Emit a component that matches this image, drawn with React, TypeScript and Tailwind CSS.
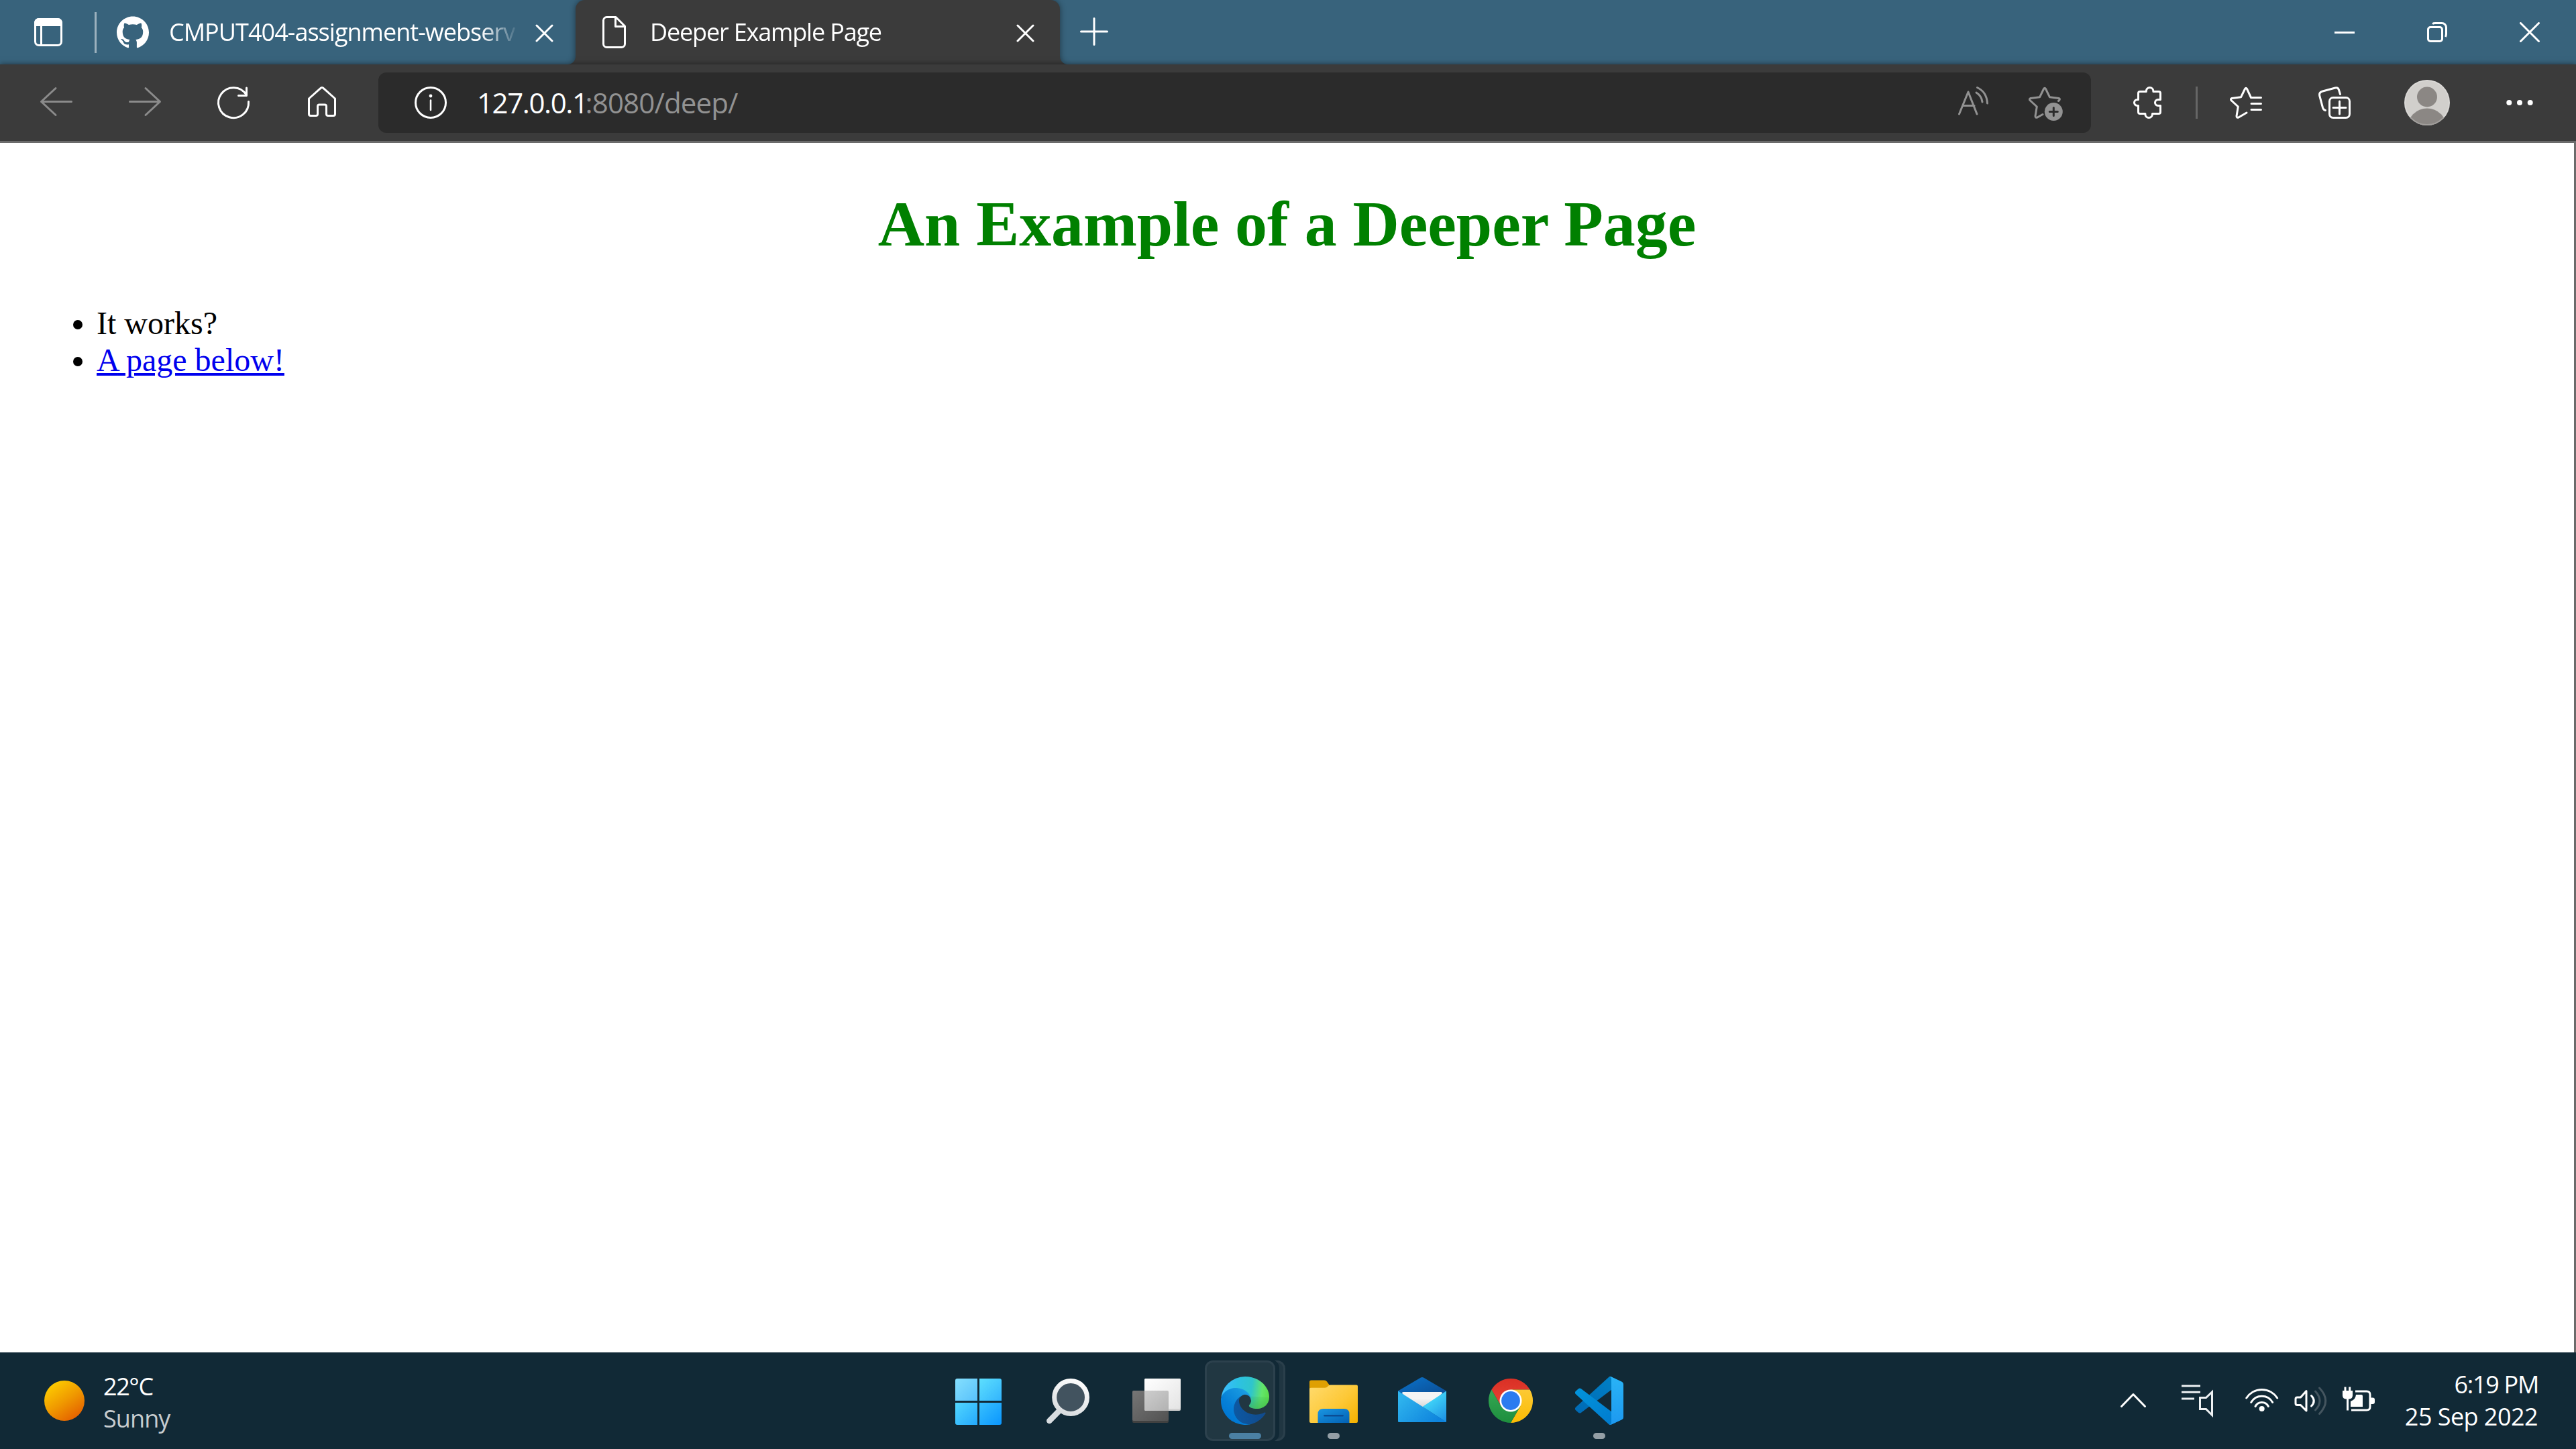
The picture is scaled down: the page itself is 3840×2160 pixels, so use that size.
import type { ReactNode } from 'react';
import { SiGithub } from 'react-icons/si';

const sans = "font-['Open_Sans','Segoe_UI',sans-serif]";

function Glyph({ children, className = '' }: { children: ReactNode; className?: string }) {
  return (
    <svg
      viewBox="0 0 48 48"
      className={`size-12 shrink-0 overflow-visible ${className}`}
      fill="none"
      stroke="currentColor"
      strokeWidth={3}
      strokeLinecap="round"
      strokeLinejoin="round"
    >
      {children}
    </svg>
  );
}

function CloseGlyph() {
  return (
    <svg viewBox="0 0 27 27" className="size-[27px] shrink-0" fill="none" stroke="currentColor" strokeWidth={3} strokeLinecap="round">
      <path d="M2 2l23 23M25 2L2 25" />
    </svg>
  );
}

function TabStrip() {
  return (
    <div className="flex h-24 items-center bg-[#38637c] text-4xl text-white">
      <div className="flex h-full w-[858px] shrink-0 items-center pl-[51px]">
        <svg viewBox="0 0 42 42" className="size-[42px] shrink-0">
          <rect x="1.5" y="1.5" width="39" height="39" rx="5.5" fill="none" stroke="currentColor" strokeWidth={3} />
          <path d="M0 12V7a7 7 0 0 1 7-7h28a7 7 0 0 1 7 7v5zM9 12h3v28H9z" fill="currentColor" />
        </svg>
        <div className="ml-12 h-[61px] w-[3px] bg-[#9cb1be]" />
        <SiGithub className="ml-[30px] size-12 shrink-0" />
        <div className="ml-[30px] w-[522px] whitespace-nowrap pb-px leading-[56px] tracking-[-0.97px] [mask-image:linear-gradient(to_right,black_89%,transparent)]">
          CMPUT404-assignment-webserv
        </div>
        <div className="ml-6 pt-[3px]">
          <CloseGlyph />
        </div>
      </div>

      <div className="relative flex h-full w-[722px] shrink-0 items-center rounded-t-[14px] bg-[#3b3b3b] pr-[38px] pl-[33px] drop-shadow-[0_0_5px_rgba(0,0,0,0.45)] before:absolute before:bottom-0 before:-left-3 before:size-3 before:bg-[radial-gradient(circle_at_0_0,transparent_11.5px,#3b3b3b_12.5px)] after:absolute after:-right-3 after:bottom-0 after:size-3 after:bg-[radial-gradient(circle_at_100%_0,transparent_11.5px,#3b3b3b_12.5px)]">
        <Glyph>
          <path d="M13.5 1.5H27L40.5 15v26.5a5 5 0 0 1-5 5h-22a5 5 0 0 1-5-5v-35a5 5 0 0 1 5-5zM26.5 2v13.5h13.5" />
        </Glyph>
        <div className="ml-[30px] pb-px tracking-[-1.17px] whitespace-nowrap">Deeper Example Page</div>
        <div className="ml-auto pt-[3px]">
          <CloseGlyph />
        </div>
      </div>

      <svg viewBox="0 0 42 42" className="mb-[3px] ml-[30px] size-[42px]" fill="none" stroke="currentColor" strokeWidth={3} strokeLinecap="round">
        <path d="M21 1.5v39M1.5 21h39" />
      </svg>

      <div className="ml-auto flex">
        <div className="grid w-[138px] place-items-center">
          <svg viewBox="0 0 30 30" className="size-[30px]" stroke="currentColor" strokeWidth={3}>
            <path d="M0 15.5h30" />
          </svg>
        </div>
        <div className="grid w-[138px] place-items-center">
          <svg viewBox="0 0 30 30" className="size-[30px]" fill="none" stroke="currentColor" strokeWidth={3}>
            <rect x="1.5" y="7.5" width="21" height="21" rx="3.5" />
            <path d="M8 2.6Q9.5 1.5 12 1.5H22a6.5 6.5 0 0 1 6.5 6.5V17.5Q28.5 20 27.4 22" />
          </svg>
        </div>
        <div className="grid w-[138px] place-items-center">
          <svg viewBox="0 0 30 30" className="size-[30px]" stroke="currentColor" strokeWidth={3} strokeLinecap="round">
            <path d="M1.5 1.5l27 27M28.5 1.5l-27 27" />
          </svg>
        </div>
      </div>
    </div>
  );
}

function ToolButton({ children, className = '' }: { children: ReactNode; className?: string }) {
  return <div className={`grid w-[132px] shrink-0 place-items-center ${className}`}>{children}</div>;
}

function Toolbar() {
  return (
    <div className="relative flex h-[117px] items-center border-b-[3px] border-[#6b6b6b] bg-[#3b3b3b] pl-[18px] text-white shadow-[0_0_8px_rgba(0,0,0,0.5)]">
      <ToolButton className="text-[#8b8b8b]">
        <Glyph>
          <path d="M46.5 22.5h-45M23 2.5l-21.5 20 21.5 20" />
        </Glyph>
      </ToolButton>
      <ToolButton className="text-[#8b8b8b]">
        <Glyph>
          <path d="M1.5 22.5h45M25 2.5l21.5 20-21.5 20" />
        </Glyph>
      </ToolButton>
      <ToolButton>
        <Glyph>
          <path d="M46.5 22.5A22.5 22.5 0 1 1 43 12M43.5 2v11.5H31.5" />
        </Glyph>
      </ToolButton>
      <ToolButton>
        <Glyph>
          <path d="M22.3 2.2q1.7-1.4 3.4 0L43.5 18v23q0 2.5-2.5 2.5h-8q-2.5 0-2.5-2.5V29.5q0-2.5-2.5-2.5h-8q-2.5 0-2.5 2.5V41q0 2.5-2.5 2.5H7q-2.5 0-2.5-2.5V18z" />
        </Glyph>
      </ToolButton>

      <div className="ml-[18px] flex h-[90px] w-[2553px] shrink-0 items-center rounded-xl bg-[#2b2b2b] pr-[45px] pl-[54px]">
        <Glyph>
          <circle cx="24" cy="24" r="22.5" />
          <path d="M24 20.5v14.5" strokeWidth={2.5} />
          <circle cx="24" cy="14" r="2.4" fill="currentColor" stroke="none" />
        </Glyph>
        <div className="ml-[45px] flex pb-px text-[42px] leading-[60px] whitespace-nowrap">
          <span className="tracking-[-1.4px]">127.0.0.1</span>
          <span className="-ml-[3px] tracking-[-0.86px] text-[#929292]">:8080/deep/</span>
        </div>
        <Glyph className="ml-auto text-[#929292]">
          <path d="M4.5 41L18 8l13 33M10 28.5h17M31.5 1.5Q45.5 8 46.5 25M30 9Q38 14 39 23" />
        </Glyph>
        <Glyph className="ml-[60px] text-[#929292]">
          <path d="M44.5 21.5q3.5-3 .5-4L31.5 15.8 25.5 3.5q-1.5-2.5-3 0L16.5 15.8 3 17.5q-2.5 1-1 3L12.3 30 10 44q0 3 3 2l8-4.5" />
          <circle cx="37.3" cy="37.5" r="13.5" fill="currentColor" stroke="none" />
          <path d="M37.3 31.5v12M31.3 37.5h12" stroke="#2b2b2b" />
        </Glyph>
      </div>

      <ToolButton className="ml-[18px]">
        <Glyph>
          <path d="M13 7.5h9.3v-.7a5.3 5.3 0 0 1 10.6 0v.7H41q2.5 0 2.5 2.5v9.5H40a4.5 4.5 0 0 0 0 9h3.5V38q0 2.5-2.5 2.5h-9.5v.7a5.3 5.3 0 0 1-10.6 0v-.7H13q-2.5 0-2.5-2.5v-9.5H9a4.5 4.5 0 0 1 0-9h1.5V10q0-2.5 2.5-2.5z" />
        </Glyph>
      </ToolButton>
      <div className="ml-[6px] h-12 w-[3px] shrink-0 bg-[#666666]" />
      <ToolButton className="ml-[6px]">
        <Glyph>
          <path d="M46.5 16.5H31.5L25.5 3.5q-1.5-2.5-3 0L16.5 15.8 3 17.5q-2.5 1-1 3L12.3 30 10 44q0 3 3 2l12-7M32 25.5h14.5M32 34.5h14.5" />
        </Glyph>
      </ToolButton>
      <ToolButton>
        <Glyph>
          <rect x="16.5" y="16.5" width="30" height="30" rx="5.5" />
          <path d="M31.5 22v19M22 31.5h19M32.5 11.5L30.5 5q-1.2-4-5.5-3L5.5 7.2q-4.7 1.4-3.8 6.3L6.5 31.5q1.2 3.5 4 4" />
        </Glyph>
      </ToolButton>
      <ToolButton className="ml-[6px]">
        <svg viewBox="0 0 68 68" className="size-[68px]">
          <defs>
            <clipPath id="avatar">
              <circle cx="34" cy="34" r="34" />
            </clipPath>
          </defs>
          <g clipPath="url(#avatar)">
            <rect width="68" height="68" fill="#d1cfcc" />
            <circle cx="34" cy="25.5" r="15" fill="#8b8784" />
            <circle cx="34" cy="72" r="29.5" fill="#8b8784" />
          </g>
          <circle cx="34" cy="34" r="33" fill="none" stroke="#ffffff" strokeOpacity=".2" strokeWidth="2" />
        </svg>
      </ToolButton>
      <ToolButton className="ml-[6px]">
        <svg viewBox="0 0 48 48" className="size-12" fill="currentColor">
          <circle cx="8.3" cy="24" r="4" />
          <circle cx="24" cy="24" r="4" />
          <circle cx="39.7" cy="24" r="4" />
        </svg>
      </ToolButton>
    </div>
  );
}

function PageContent() {
  return (
    <div className="relative h-[1803px] border-r-[3px] border-[#6b6b6b] bg-white px-6 pt-[66px] font-['Liberation_Serif','Times_New_Roman',serif]">
      <h1 className="text-center text-[96px] leading-[110px] font-bold tracking-[-0.1px] text-[#008000]">
        An Example of a Deeper Page
      </h1>
      <ul className="mt-[65px] list-disc pl-[120px] text-5xl leading-[55px] text-black">
        <li>It works?</li>
        <li>
          <a className="text-[#0000ee] underline">
            <span className="tracking-[-2.7px]">A</span> page below!
          </a>
        </li>
      </ul>
    </div>
  );
}

function StartIcon() {
  return (
    <svg viewBox="0 0 72 72" className="size-[72px]">
      <defs>
        <linearGradient id="w1" x1="0" y1="0" x2="1" y2="1"><stop stopColor="#84dffe" /><stop offset="1" stopColor="#58c1fb" /></linearGradient>
        <linearGradient id="w2" x1="0" y1="0" x2="1" y2="1"><stop stopColor="#5ddffe" /><stop offset="1" stopColor="#32b4fd" /></linearGradient>
        <linearGradient id="w3" x1="0" y1="0" x2="1" y2="1"><stop stopColor="#52d6fe" /><stop offset="1" stopColor="#24a9fd" /></linearGradient>
        <linearGradient id="w4" x1="0" y1="0" x2="1" y2="1"><stop stopColor="#38c0fe" /><stop offset="1" stopColor="#0a96fe" /></linearGradient>
      </defs>
      <path d="M0 6q0-3 3-3h30v33H0z" fill="url(#w1)" />
      <path d="M36 3h30q3 0 3 3v30H36z" fill="url(#w2)" />
      <path d="M0 39h33v33H3q-3 0-3-3z" fill="url(#w3)" />
      <path d="M36 39h33v30q0 3-3 3H36z" fill="url(#w4)" />
    </svg>
  );
}

function SearchIcon() {
  return (
    <svg viewBox="0 0 72 72" className="size-[72px]">
      <defs>
        <linearGradient id="lens" gradientUnits="userSpaceOnUse" x1="50" y1="3" x2="26" y2="58"><stop stopColor="#ffffff" /><stop offset="1" stopColor="#d6dadd" /></linearGradient>
      </defs>
      <path d="M25 49L8.3 66" stroke="#d8dce0" strokeWidth="8.5" strokeLinecap="round" />
      <circle cx="40.1" cy="31" r="24.4" fill="#42535f" stroke="url(#lens)" strokeWidth="7" />
    </svg>
  );
}

function TaskViewIcon() {
  return (
    <svg viewBox="0 0 72 72" className="size-[72px]">
      <defs>
        <linearGradient id="tv1" x1="0" y1="0" x2="1" y2="1"><stop stopColor="#ffffff" /><stop offset="1" stopColor="#e4e4e4" /></linearGradient>
        <linearGradient id="tv2" x1="0" y1="0" x2="1" y2="1"><stop stopColor="#767676" /><stop offset="1" stopColor="#525252" /></linearGradient>
        <linearGradient id="tv3" x1="0" y1="0" x2="1" y2="1"><stop stopColor="#cdcdcd" /><stop offset="1" stopColor="#b2b2b2" /></linearGradient>
      </defs>
      <rect x="0" y="21" width="54" height="48" rx="2" fill="#414141" />
      <rect x="0" y="21" width="54" height="45" rx="2" fill="url(#tv2)" />
      <rect x="18" y="3" width="54" height="48" rx="2" fill="#d2d2d2" />
      <rect x="18" y="3" width="54" height="45" rx="2" fill="url(#tv1)" />
      <path d="M18 21h34q2 0 2 2v28H20q-2 0-2-2z" fill="url(#tv3)" />
    </svg>
  );
}

function EdgeIcon() {
  return (
    <svg viewBox="0 0 256 256" className="relative size-[72px]">
      <defs>
        <linearGradient id="e1" gradientUnits="userSpaceOnUse" x1="63" y1="178" x2="242" y2="178"><stop stopColor="#0c59a4" /><stop offset="1" stopColor="#114a8b" /></linearGradient>
        <linearGradient id="e2" gradientUnits="userSpaceOnUse" x1="157" y1="100" x2="46" y2="221"><stop stopColor="#1b9de2" /><stop offset=".16" stopColor="#1595df" /><stop offset=".67" stopColor="#0680d7" /><stop offset="1" stopColor="#0078d4" /></linearGradient>
        <linearGradient id="e3" gradientUnits="userSpaceOnUse" x1="10" y1="90" x2="255" y2="120"><stop stopColor="#3cbcff" /><stop offset=".3" stopColor="#2cc1e4" /><stop offset=".62" stopColor="#2fc5cc" /><stop offset=".85" stopColor="#62e56c" /><stop offset="1" stopColor="#5cdc4c" /></linearGradient>
        <linearGradient id="e4" gradientUnits="userSpaceOnUse" x1="200" y1="90" x2="190" y2="180"><stop stopColor="#2fa84f" stopOpacity="0" /><stop offset="1" stopColor="#3fb54a" stopOpacity=".7" /></linearGradient>
      </defs>
      <g transform="translate(-4.63 -4.92)">
        <path fill="url(#e1)" d="M235.68 195.46a93.73 93.73 0 0 1-10.54 4.71 101.87 101.87 0 0 1-35.9 6.46c-47.32 0-88.54-32.55-88.54-74.32A31.48 31.48 0 0 1 117.13 105c-42.8 1.8-53.8 46.4-53.8 72.53 0 73.88 68.09 81.37 82.76 81.37 7.91 0 19.84-2.3 27-4.56l1.31-.44a128.34 128.34 0 0 0 66.6-52.8 4 4 0 0 0-5.32-5.64z" />
        <path fill="url(#e2)" d="M110.34 246.34A79.2 79.2 0 0 1 87.6 225a80.72 80.72 0 0 1 29.53-120c3.12-1.47 8.45-4.13 15.54-4a32.35 32.35 0 0 1 25.69 13 31.88 31.88 0 0 1 6.36 18.66c0-.21 24.46-79.6-80-79.6-43.9 0-80 41.66-80 78.21a130.15 130.15 0 0 0 12.11 56 128 128 0 0 0 156.38 67.11 75.55 75.55 0 0 1-62.78-8z" />
        <path fill="url(#e3)" d="M156.94 153.78c-.81 1.05-3.3 2.5-3.3 5.66 0 2.61 1.7 5.12 4.72 7.23 14.38 10 41.49 8.68 41.56 8.68a59.56 59.56 0 0 0 30.27-8.35 61.38 61.38 0 0 0 30.43-52.88c.26-22.41-8-37.31-11.34-43.91C228.09 28.76 182.35 4.92 132.61 4.92a128 128 0 0 0-128 126.2c.48-36.54 36.8-66.05 80-66.05 3.5 0 23.46.34 42 10.07 16.34 8.58 24.9 18.94 30.85 29.21 6.18 10.67 7.28 24.15 7.28 29.52s-2.74 13.33-7.8 19.91z" />
        <path fill="url(#e4)" d="M156.94 153.78c-.81 1.05-3.3 2.5-3.3 5.66 0 2.61 1.7 5.12 4.72 7.23 14.38 10 41.49 8.68 41.56 8.68a59.56 59.56 0 0 0 30.27-8.35 61.38 61.38 0 0 0 30.43-52.88L160 110c3.5 9 4.74 19 4.74 23.87s-2.74 13.33-7.8 19.91z" />
      </g>
    </svg>
  );
}

function ExplorerIcon() {
  return (
    <svg viewBox="0 0 72 72" className="size-[72px]">
      <defs>
        <linearGradient id="f1" gradientUnits="userSpaceOnUse" x1="8" y1="12" x2="66" y2="72"><stop stopColor="#ffd968" /><stop offset=".55" stopColor="#fdc836" /><stop offset="1" stopColor="#f5b202" /></linearGradient>
        <linearGradient id="f2" x1="0" y1="0" x2="1" y2="1"><stop stopColor="#1a96e2" /><stop offset="1" stopColor="#0261b4" /></linearGradient>
      </defs>
      <path d="M0 8q0-2.5 2.5-2.5H22q2.5 0 4 2L30 13v10H0z" fill="#dfa002" />
      <path d="M0 18.5q0-1.7 2-1.7h21q2.5 0 4-1.8l1.5-1.5q1.2-1 3-1H70q2 0 2 2V67q0 2-2 2H2q-2 0-2-2z" fill="url(#f1)" />
      <path d="M12.5 69V56q0-8 8-8h31q8 0 8 8v13z" fill="url(#f2)" />
      <path d="M22.5 58.3h27" stroke="#0b4d94" strokeWidth="2.6" strokeLinecap="round" />
    </svg>
  );
}

function MailIcon() {
  return (
    <svg viewBox="0 0 72 72" className="size-[72px]">
      <defs>
        <linearGradient id="m1" x1="0" y1="0" x2="1" y2="1"><stop stopColor="#0a74cc" /><stop offset="1" stopColor="#0c4a90" /></linearGradient>
        <linearGradient id="m2" gradientUnits="userSpaceOnUse" x1="6" y1="28" x2="50" y2="74"><stop stopColor="#2fb4ee" /><stop offset="1" stopColor="#0e84dd" /></linearGradient>
        <linearGradient id="m3" gradientUnits="userSpaceOnUse" x1="50" y1="38" x2="72" y2="66"><stop stopColor="#3ccdf6" /><stop offset="1" stopColor="#1d8fe4" /></linearGradient>
        <linearGradient id="m4" x1="0" y1="0" x2="0" y2="1"><stop offset=".4" stopColor="#f4f4f4" /><stop offset="1" stopColor="#d4d4d4" /></linearGradient>
      </defs>
      <path d="M0 21.5L34 1.5q2-1.2 4 0l34 20V30H0z" fill="url(#m1)" />
      <path d="M6 25q0-2 2-2h56q2 0 2 2L52 38 36.5 47 20 38z" fill="url(#m4)" />
      <path d="M72 21.5L36.5 45 72 68z" fill="url(#m3)" />
      <path d="M0 21.5L72 67.5q-.5.5-1.5.5H1.5Q0 68 0 66.5z" fill="url(#m2)" />
    </svg>
  );
}

function ChromeIcon() {
  return (
    <svg viewBox="0 0 72 72" className="size-[72px]">
      <defs>
        <linearGradient id="c1" x1="0" y1="0" x2="0" y2="1"><stop stopColor="#d93025" /><stop offset="1" stopColor="#ea4335" /></linearGradient>
        <linearGradient id="c2" x1="0" y1="0" x2="0" y2="1"><stop stopColor="#fcc934" /><stop offset="1" stopColor="#fbbc04" /></linearGradient>
        <linearGradient id="c3" x1="0" y1="0" x2="0" y2="1"><stop stopColor="#34a853" /><stop offset="1" stopColor="#1e8e3e" /></linearGradient>
      </defs>
      <path d="M7.4 19.5A33 33 0 0 1 64.6 19.5H36V36L21.7 44.25z" fill="url(#c1)" />
      <path d="M64.6 19.5A33 33 0 0 1 36 69L50.3 44.25 36 36V19.5z" fill="url(#c2)" />
      <path d="M36 69A33 33 0 0 1 7.4 19.5L21.7 44.25 36 36 50.3 44.25z" fill="url(#c3)" />
      <circle cx="36" cy="36" r="16.5" fill="#ffffff" />
      <circle cx="36" cy="36" r="13.9" fill="#2b7bf0" />
    </svg>
  );
}

function CodeIcon() {
  return (
    <svg viewBox="0 0 100 100" className="size-[72px]">
      <defs>
        <linearGradient id="v1" x1="0" y1="0" x2="0" y2="1"><stop stopColor="#29b3f6" /><stop offset="1" stopColor="#1d99f0" /></linearGradient>
        <linearGradient id="v2" x1="0" y1="1" x2="1" y2="0"><stop stopColor="#0069b4" /><stop offset="1" stopColor="#0083c8" /></linearGradient>
        <linearGradient id="v3" x1="0" y1="0" x2="1" y2="1"><stop stopColor="#0294dc" /><stop offset="1" stopColor="#0078cc" /></linearGradient>
      </defs>
      <path fill="url(#v2)" d="M96.461 10.796L75.857.876C73.472-.273 70.622.212 68.75 2.083L1.299 63.583c-1.815 1.654-1.813 4.511.004 6.162l5.51 5.009c1.485 1.35 3.722 1.45 5.321.237L93.361 13.37C96.086 11.303 100 13.246 100 16.667v-.24c0-2.4-1.375-4.589-3.539-5.631z" />
      <path fill="url(#v3)" d="M96.461 89.204l-20.604 9.921c-2.385 1.148-5.235.663-7.107-1.208L1.299 36.417c-1.815-1.654-1.813-4.511.004-6.162l5.51-5.009c1.485-1.35 3.722-1.45 5.321-.237L93.361 86.63C96.086 88.697 100 86.754 100 83.333v.24c0 2.4-1.375 4.589-3.539 5.631z" />
      <path fill="url(#v1)" d="M75.858 99.126c-2.386 1.148-5.236.662-7.108-1.209C71.056 100.223 75 98.59 75 95.328V4.672C75 1.41 71.056-.223 68.75 2.083 70.622.211 73.472-.274 75.858.874l20.601 9.907C98.623 11.822 100 14.011 100 16.413v67.174c0 2.402-1.377 4.592-3.541 5.633z" />
    </svg>
  );
}

function TaskbarItem({ children, running }: { children: ReactNode; running?: 'active' | 'background' }) {
  return (
    <div className="relative grid h-full w-[132px] place-items-center">
      {children}
      {running === 'active' && <div className="absolute bottom-[15px] left-[42px] h-[9px] w-12 rounded-full bg-[#4b80a3]" />}
      {running === 'background' && <div className="absolute bottom-[15px] left-[57px] h-[9px] w-[18px] rounded-full bg-[#949fa6]" />}
    </div>
  );
}

function Taskbar() {
  return (
    <div className="flex h-36 items-center bg-[#112936] text-4xl text-white">
      <div className="flex w-[1394px] shrink-0 items-center pl-[66px]">
        <div className="size-[60px] rounded-full bg-[linear-gradient(145deg,#ffd400_5%,#f09a00_50%,#e25600_95%)]" />
        <div className="ml-7 pt-[5px] leading-[48px]">
          <div className="tracking-[-1.4px]">22°C</div>
          <div className="tracking-[-0.9px] text-[#c7cccf]">Sunny</div>
        </div>
      </div>

      <div className="flex h-full">
        <TaskbarItem><StartIcon /></TaskbarItem>
        <TaskbarItem><SearchIcon /></TaskbarItem>
        <TaskbarItem><TaskViewIcon /></TaskbarItem>
        <TaskbarItem running="active">
          <div className="relative grid h-[120px] w-[120px] place-items-center rounded-xl border-[3px] border-[#2a3f4b] bg-[#203642]">
            <div className="absolute -inset-y-[4px] -left-[4px] w-[112px] rounded-xl bg-[#112936]" />
            <div className="absolute -inset-y-[3px] -left-[3px] w-[105px] rounded-xl border-[3px] border-[#2c414d] bg-[#213742]" />
            <EdgeIcon />
          </div>
        </TaskbarItem>
        <TaskbarItem running="background"><ExplorerIcon /></TaskbarItem>
        <TaskbarItem><MailIcon /></TaskbarItem>
        <TaskbarItem><ChromeIcon /></TaskbarItem>
        <TaskbarItem running="background"><CodeIcon /></TaskbarItem>
      </div>

      <div className="ml-auto flex items-center pr-14">
        <Glyph>
          <path d="M6.5 32.5L24 14.5l17.5 18" />
        </Glyph>
        <Glyph className="ml-12 text-[#eef1f3]">
          <path d="M0 2h28M0 11.3h28M0 21h19M27.5 19.5H36.5L45.5 11v34.5L36.5 36.5H27.5z" strokeLinecap="butt" strokeLinejoin="miter" />
        </Glyph>
        <Glyph className="ml-12">
          <path d="M.7 20a27.4 27.4 0 0 1 46 0M7.7 26.5a18.5 18.5 0 0 1 32 0M14 32.5a10.8 10.8 0 0 1 19.4 0" />
          <circle cx="23.7" cy="36" r="4" fill="currentColor" stroke="none" />
        </Glyph>
        <Glyph className="ml-6">
          <path d="M4.5 19h5l8.500-9.500V39L9.500 30.500h-5Q2 30.500 2 28v-6.500Q2 19 4.500 19zM25.500 16.500q7.500 8 0 15.500" />
          <path d="M31.5 10q13 14.3 0 28M37.5 5q18.500 19.300 0 38.500" stroke="#44555f" />
        </Glyph>
        <Glyph className="ml-6">
          <path d="M19 10h17q5 0 5 5v18q0 5-5 5H13" strokeLinecap="butt" />
          <path d="M42 19.500h3q3 0 3 3v3.500q0 3-3 3h-3z" fill="currentColor" stroke="none" />
          <path d="M20 15h8q2 0 2 2v16H12v-8q7.500-2.500 8-10z" fill="currentColor" stroke="none" />
          <path d="M0 9h15v7q0 5-5 5.500H5Q0 21 0 16z" fill="currentColor" stroke="none" />
          <path d="M4 3.500V9M10.700 3.500V9M7.500 20v18.500" strokeLinecap="butt" />
        </Glyph>
        <div className="w-[244px] pb-px text-right leading-[48px]">
          <div className="tracking-[-1.3px]">6:19 PM</div>
          <div className="mr-[1px] tracking-[-0.55px]">25 Sep 2022</div>
        </div>
      </div>
    </div>
  );
}

export default function App() {
  return (
    <div className={`h-[2160px] w-[3840px] overflow-hidden bg-white ${sans}`}>
      <TabStrip />
      <Toolbar />
      <PageContent />
      <Taskbar />
    </div>
  );
}
